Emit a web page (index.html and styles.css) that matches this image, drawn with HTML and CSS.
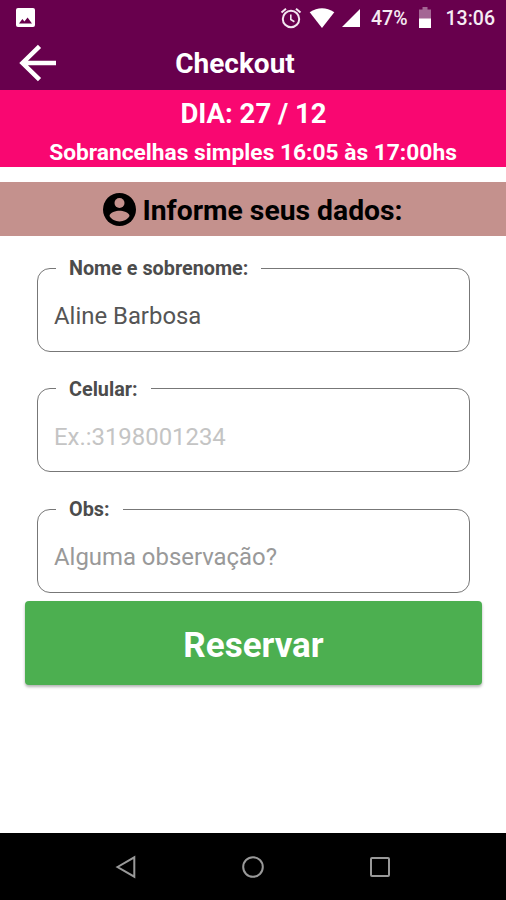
FILE: index.html
```html
<!DOCTYPE html>
<html lang="pt-BR">
<head>
    <meta charset="UTF-8">
    <meta name="viewport" content="width=device-width, initial-scale=1.0">
    <title>Checkout</title>
    <link rel="stylesheet" href="styles.css">
</head>
<body>
    <div class="screen">
        <div class="status-bar">
            <svg class="picture-icon" width="19" height="19" viewBox="0 0 19 19">
                <rect width="19" height="19" rx="2" fill="#fff"/>
                <path d="M3 15.5l3.4-4.5 2 2.6 3.2-4L16 15.5z" fill="#68004d"/>
            </svg>
            <svg class="alarm-icon" width="22" height="22" viewBox="0 0 22 22" fill="none" stroke="#f3e6f0">
                <circle cx="11" cy="12" r="8.2" stroke-width="2"/>
                <path d="M1.5 5.5L6 1.7M20.5 5.5L16 1.7" stroke-width="2"/>
                <path d="M10.8 7.5v5l3.6 2.2" stroke-width="1.6"/>
            </svg>
            <svg class="wifi-icon" width="26" height="20" viewBox="0 0 26 20">
                <path d="M13 20L.7 4.3Q13-3.8 25.3 4.3z" fill="#fff"/>
            </svg>
            <svg class="signal-icon" width="18" height="18" viewBox="0 0 18 18">
                <path d="M0 18L18 0v18z" fill="#fff"/>
            </svg>
            <span class="battery-level">47%</span>
            <svg class="battery-icon" width="12" height="21" viewBox="0 0 12 21">
                <path d="M0 2.5h3.5V0h5v2.5H12V21H0z" fill="#fff" fill-opacity=".4"/>
                <path d="M0 11.5h12V21H0z" fill="#fff"/>
            </svg>
            <span class="clock">13:06</span>
        </div>

        <header class="app-bar">
            <svg class="back-icon" width="38" height="38" viewBox="0 0 38 38" fill="none" stroke="#fff" stroke-width="4.5">
                <path d="M37 19H4M20.5 2.3L3.5 19l17 16.7"/>
            </svg>
            <h1>Checkout</h1>
        </header>

        <div class="booking">
            <div class="booking-day">DIA: 27 / 12</div>
            <div class="booking-service">Sobrancelhas simples 16:05 às 17:00hs</div>
        </div>

        <h2 class="section-title">
            <svg width="33" height="33" viewBox="0 0 33 33">
                <circle cx="16.5" cy="16.5" r="16.5" fill="#000"/>
                <circle cx="16.5" cy="10" r="5" fill="#c4918d"/>
                <path d="M6.5 23c0-3.5 6.7-5.2 10-5.2s10 1.7 10 5.2c-2 3.3-5.8 5.4-10 5.4S8.5 26.3 6.5 23z" fill="#c4918d"/>
            </svg>
            <span>Informe seus dados:</span>
        </h2>

        <form class="form">
            <fieldset>
                <legend>Nome e sobrenome:</legend>
                <input type="text" value="Aline Barbosa">
            </fieldset>
            <fieldset>
                <legend>Celular:</legend>
                <input type="tel" class="phone" placeholder="Ex.:3198001234">
            </fieldset>
            <fieldset>
                <legend>Obs:</legend>
                <input type="text" placeholder="Alguma observação?">
            </fieldset>
            <button type="button" class="submit-btn">Reservar</button>
        </form>

        <nav class="nav-bar">
            <svg width="24" height="24" viewBox="0 0 24 24"><path d="M3.5 12L20.3 2.3v19.4z"/></svg>
            <svg width="24" height="24" viewBox="0 0 24 24"><circle cx="12" cy="12" r="9.8"/></svg>
            <svg width="24" height="24" viewBox="0 0 24 24"><rect x="3" y="3" width="18" height="18" rx="1"/></svg>
        </nav>
    </div>
</body>
</html>
```
FILE: styles.css
```css
* {
    box-sizing: border-box;
}
body {
    margin: 0;
    font-family: Roboto, "Liberation Sans", sans-serif;
    background-color: #fff;
}
.screen {
    display: flex;
    flex-direction: column;
    height: 900px;
    overflow: hidden;
}
.status-bar {
    display: flex;
    align-items: center;
    height: 36px;
    padding: 0 11px 1px 16px;
    background-color: #68004d;
    color: #f6ebf3;
    font-size: 19.5px;
    font-weight: 500;
}
.status-bar span {
    padding-top: 2px;
}
.alarm-icon {
    margin-left: auto;
}
.wifi-icon {
    margin-left: 7px;
}
.signal-icon {
    margin-left: 7px;
}
.battery-level {
    margin-left: 11px;
}
.battery-icon {
    margin-left: 11px;
}
.clock {
    margin-left: 15px;
}
.app-bar {
    display: flex;
    align-items: center;
    height: 54px;
    padding: 0 19px;
    background-color: #68004d;
    color: #fff;
}
.app-bar h1 {
    flex: 1;
    margin: 0 74px 0 0;
    padding-top: 1px;
    font-size: 28px;
    font-weight: 700;
    text-align: center;
}
.booking {
    height: 77px;
    background-color: #f90771;
    color: #fff;
    font-weight: 700;
    text-align: center;
}
.booking-day {
    padding: 6px 0 0 1px;
    font-size: 27.5px;
    line-height: 36px;
}
.booking-service {
    font-size: 22.75px;
    line-height: 41px;
}
.section-title {
    display: flex;
    align-items: center;
    justify-content: center;
    gap: 6px;
    height: 54px;
    margin: 15px 0 0;
    background-color: #c4918d;
    color: #000;
    font-size: 28.3px;
    font-weight: 700;
}
.section-title span {
    padding-top: 3px;
}
.form {
    display: flex;
    flex-direction: column;
    padding: 22px 24px 0 25px;
}
fieldset {
    height: 93.5px;
    margin: 0 12px 27px;
    padding: 0 16px;
    border: 1.5px solid #777;
    border-radius: 13px;
}
legend {
    height: 20px;
    margin-left: 2px;
    padding: 0 13px;
    color: #4c4c4c;
    font-size: 19.8px;
    font-weight: 700;
    line-height: 22px;
}
input {
    display: block;
    width: 100%;
    height: 40px;
    margin-top: 18px;
    padding: 0;
    border: none;
    outline: none;
    background: none;
    color: #555;
    font-family: inherit;
    font-size: 23.9px;
}
input::placeholder {
    color: #999;
}
.phone::placeholder {
    color: #c4c4c4;
}
.submit-btn {
    height: 84px;
    margin-top: -18.5px;
    padding: 4px 0 0;
    border: none;
    border-radius: 4px;
    background-color: #4caf50;
    box-shadow: 0 2px 3px rgba(0, 0, 0, 0.3);
    color: #fff;
    font-family: inherit;
    font-size: 35px;
    font-weight: 700;
}
.nav-bar {
    display: flex;
    align-items: center;
    justify-content: center;
    gap: 103px;
    height: 67px;
    margin-top: auto;
    background-color: #000;
}
.nav-bar svg {
    fill: none;
    stroke: #999;
    stroke-width: 2;
}
```
